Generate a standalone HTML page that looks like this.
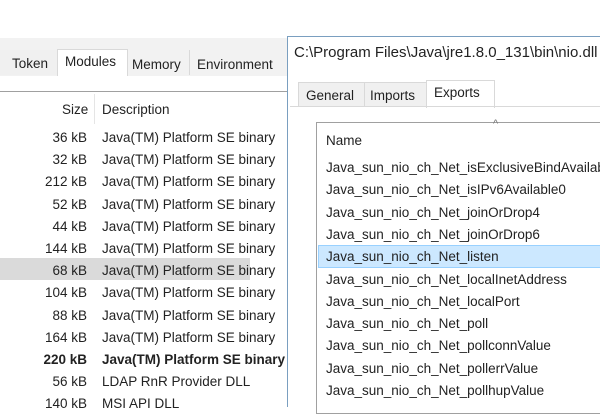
<!DOCTYPE html>
<html><head><style>
body{margin:0;width:600px;height:400px;overflow:hidden;background:#fff;font-family:"Liberation Sans",sans-serif;font-size:13.5px;color:#222;position:relative}
.a{position:absolute;white-space:nowrap}
.r{position:absolute;white-space:nowrap}
</style></head><body>
<div class="a" style="left:0;top:38px;width:290px;height:38px;background:#f2f2f2"></div>
<div class="a" style="left:0;top:50px;width:58px;height:25px;background:#f0f0f0;border-right:1px solid #d9d9d9"></div>
<div class="a" style="left:12px;top:56px;">Token</div>
<div class="a" style="left:57px;top:49px;width:69px;height:28px;background:#fff;border:1px solid #d9d9d9;border-bottom:none"></div>
<div class="a" style="left:65px;top:54px;">Modules</div>
<div class="a" style="left:127px;top:50px;width:62px;height:25px;border-right:1px solid #d9d9d9"></div>
<div class="a" style="left:132px;top:57px;">Memory</div>
<div class="a" style="left:197px;top:57px;">Environment</div>
<div class="a" style="left:0;top:76px;width:290px;height:15px;background:#fff"></div>
<div class="a" style="left:0;top:91px;width:290px;height:1px;background:#a0a0a0"></div>
<div class="a" style="left:94px;top:94px;width:1px;height:30px;background:#e5e5e5"></div>
<div class="a" style="left:62px;top:102px;">Size</div>
<div class="a" style="left:102px;top:102px;">Description</div>
<div class="a" style="left:0;top:258px;width:250px;height:22px;background:#dadada"></div>
<div id="L"></div>
<div class="a" style="left:287px;top:36px;width:320px;height:370px;background:#fff;border-left:1px solid #7a9fc0;border-top:1px solid #7a9fc0"></div>
<div class="a" style="left:294px;top:44px;font-size:15px">C:\Program Files\Java\jre1.8.0_131\bin\nio.dll</div>
<div class="a" style="left:298px;top:82px;width:65px;height:24px;background:#f0f0f0;border:1px solid #d9d9d9;border-bottom:none"></div>
<div class="a" style="left:306px;top:88px;">General</div>
<div class="a" style="left:364px;top:82px;width:62px;height:24px;background:#f0f0f0;border:1px solid #d9d9d9;border-bottom:none"></div>
<div class="a" style="left:370px;top:88px;">Imports</div>
<div class="a" style="left:426px;top:80px;width:67px;height:27px;background:#fff;border:1px solid #d9d9d9;border-bottom:none"></div>
<div class="a" style="left:434px;top:85px;">Exports</div>
<div class="a" style="left:290px;top:106px;width:320px;height:1px;background:#d9d9d9"></div>
<div class="a" style="left:316px;top:122px;width:300px;height:290px;border:1px solid #a0a0a0;background:#fff"></div>
<div class="a" style="left:493px;top:118px;font-size:11px;color:#777">^</div>
<div class="a" style="left:326px;top:133px;">Name</div>
<div class="a" style="left:318px;top:245px;width:300px;height:21px;background:#cce8ff;border:1px solid #99d1ff"></div>
<div id="R"></div>
<script>
var s=["36 kB","32 kB","212 kB","52 kB","44 kB","144 kB","68 kB","104 kB","88 kB","164 kB","220 kB","56 kB","140 kB"];
var h="";
for(var i=0;i<s.length;i++){var y=130+i*22.2;var b=i==10?"font-weight:bold;":"";
var d=i<=10?"Java(TM) Platform SE binary":(i==11?"LDAP RnR Provider DLL":"MSI API DLL");
h+='<div class="r" style="'+b+'right:513px;top:'+y+'px">'+s[i]+'</div><div class="r" style="'+b+'left:102px;top:'+y+'px;width:185px;overflow:hidden">'+d+'</div>';}
document.getElementById("L").innerHTML=h;
var r=["isExclusiveBindAvailable","isIPv6Available0","joinOrDrop4","joinOrDrop6","listen","localInetAddress","localPort","poll","pollconnValue","pollerrValue","pollhupValue"];
h="";
for(var i=0;i<r.length;i++){h+='<div class="r" style="left:326px;top:'+(160+i*22.3)+'px">Java_sun_nio_ch_Net_'+r[i]+'</div>';}
document.getElementById("R").innerHTML=h;
</script>
</body></html>
